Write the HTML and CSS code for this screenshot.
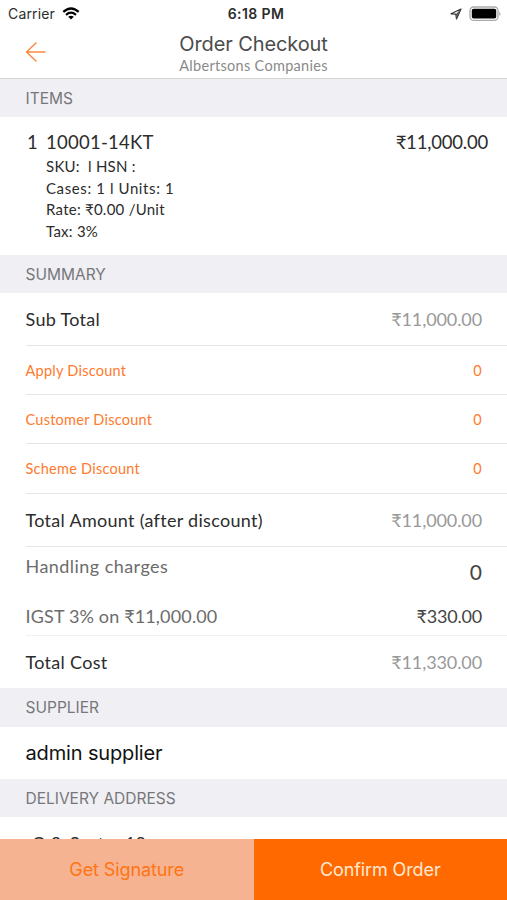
FILE: index.html
```html
<!DOCTYPE html>
<html lang="en">
<head>
    <meta charset="utf-8" />
    <title>Order Checkout</title>
    <meta name="viewport" content="width=device-width, initial-scale=1.0">
    <link rel="stylesheet" href="styles.css">
</head>
<body>
    <div class="screen">
        <div class="status-bar">
            <div class="carrier">
                <span>Carrier</span>
                <svg class="wifi" width="18" height="13" viewBox="0 0 18 13">
                    <path d="M1.3 4.9 Q9 -2 16.7 4.9" fill="none" stroke="#000" stroke-width="2.3" />
                    <path d="M4 7.8 Q9 3.5 14 7.8" fill="none" stroke="#000" stroke-width="2.2" />
                    <path d="M6.2 9.8 Q9 7.5 11.8 9.8 L9 12.6 Z" fill="#000" />
                </svg>
            </div>
            <span class="time">6:18 PM</span>
            <div class="status-icons">
                <svg width="12" height="12" viewBox="0 0 12 12">
                    <path d="M11 1 L1 5.8 L5.8 6.2 L6.5 11 Z" fill="none" stroke="#333" stroke-width="1.2" stroke-linejoin="round" />
                    <path d="M11 1 L5.8 6.2 L6.5 11 Z" fill="#555" />
                </svg>
                <svg width="32" height="16" viewBox="0 0 32 16">
                    <rect x="1" y="1" width="28" height="13.4" rx="3.6" fill="#fff" stroke="#aaa" stroke-width="1.3" />
                    <rect x="2.8" y="2.8" width="24.4" height="9.8" rx="1.8" fill="#000" />
                    <path d="M30.4 5.4 Q32.4 7.7 30.4 10 Z" fill="#999" />
                </svg>
            </div>
        </div>

        <header class="nav">
            <a class="back" href="#" aria-label="Back">
                <svg width="22" height="22" viewBox="0 0 22 22">
                    <path d="M11.5 1.5 L1.5 11 L11.5 20.5 M1.5 11 H20.5" fill="none" stroke="#ff8840" stroke-width="1.4" />
                </svg>
            </a>
            <div class="titles">
                <h1>Order Checkout</h1>
                <p>Albertsons Companies</p>
            </div>
        </header>

        <main>
            <h2>ITEMS</h2>
            <div class="item">
                <span class="qty">1</span>
                <div class="item-info">
                    <div class="item-name">10001-14KT</div>
                    <div>SKU:&nbsp; l HSN :</div>
                    <div class="cases">Cases: 1 l Units: 1</div>
                    <div>Rate: ₹0.00 /Unit</div>
                    <div>Tax: 3%</div>
                </div>
                <span class="price">₹11,000.00</span>
            </div>

            <h2>SUMMARY</h2>
            <div class="row total"><span class="label">Sub Total</span><span class="amount">₹11,000.00</span></div>
            <div class="row discount"><span>Apply Discount</span><span>0</span></div>
            <div class="row discount"><span>Customer Discount</span><span>0</span></div>
            <div class="row discount last"><span>Scheme Discount</span><span>0</span></div>
            <div class="row total"><span class="label">Total Amount (after discount)</span><span class="amount">₹11,000.00</span></div>
            <div class="charges">
                <div class="charge handling"><span>Handling charges</span><span class="zero">0</span></div>
                <div class="charge igst"><span>IGST 3% on ₹11,000.00</span><span class="tax">₹330.00</span></div>
            </div>
            <div class="row total cost"><span class="label">Total Cost</span><span class="amount">₹11,330.00</span></div>

            <h2 class="supplier-head">SUPPLIER</h2>
            <div class="supplier">admin supplier</div>

            <h2>DELIVERY ADDRESS</h2>
            <div class="address">C-2, Sector 18</div>
        </main>

        <footer>
            <button type="button" class="signature">Get Signature</button>
            <button type="button" class="confirm">Confirm Order</button>
        </footer>
    </div>
</body>
</html>
```

FILE: styles.css
```css
* {
    box-sizing: border-box;
}

body {
    margin: 0;
    background: #fff;
    font-family: Lato, "Noto Sans", sans-serif;
    color: #2c2c2c;
}

h1, h2, p {
    margin: 0;
    font-weight: normal;
}

.screen {
    display: flex;
    flex-direction: column;
    height: 900px;
    overflow: hidden;
}

.status-bar {
    display: grid;
    grid-template-columns: 1fr auto 1fr;
    align-items: center;
    height: 27px;
    padding: 0 6px 0 8px;
    font-family: Inter, sans-serif;
    font-size: 14px;
    flex-shrink: 0;
}

.carrier, .status-icons {
    display: flex;
    align-items: center;
    gap: 7px;
}

.carrier {
    letter-spacing: 0.15px;
}

.status-icons {
    justify-content: flex-end;
}

.time {
    padding-left: 3px;
    font-weight: 600;
    letter-spacing: 0.4px;
}

.nav {
    display: grid;
    grid-template-columns: 1fr auto 1fr;
    height: 52px;
    padding: 0 25px;
    border-bottom: 1px solid #d3d3d6;
    flex-shrink: 0;
}

.back {
    padding-top: 14px;
}

.back svg {
    display: block;
}

.titles {
    padding-top: 5px;
}

h1 {
    font-family: Inter, sans-serif;
    font-size: 20px;
    line-height: 24px;
    letter-spacing: -0.1px;
    color: #4c4c4c;
}

.titles p {
    font-size: 14.5px;
    line-height: 19px;
    letter-spacing: 0.3px;
    color: #8a8a8a;
}

main {
    flex: 1;
    min-height: 0;
    overflow: hidden;
}

h2 {
    height: 38px;
    padding-left: 25.5px;
    background: #efeff4;
    font-family: Inter, sans-serif;
    font-size: 15.5px;
    line-height: 39px;
    color: #77777b;
}

.item {
    display: flex;
    height: 138px;
    padding: 13px 19px 0 27px;
    font-size: 15px;
    line-height: 21.6px;
    letter-spacing: 0.25px;
}

.qty, .item-name, .price {
    font-size: 18.5px;
    line-height: 24px;
}

.item-name {
    margin-bottom: 2px;
}

.cases {
    letter-spacing: 0.6px;
}

.qty {
    width: 19px;
}

.item-info {
    flex: 1;
}

.price {
    letter-spacing: -0.2px;
}

.row {
    display: flex;
    justify-content: space-between;
    align-items: center;
    margin-left: 25.5px;
    padding-right: 25px;
    border-bottom: 1px solid #e5e5e7;
}

.total {
    height: 53px;
    font-size: 18px;
}

.label {
    letter-spacing: 0.3px;
}

.amount {
    color: #999;
    letter-spacing: -0.1px;
}

.discount {
    height: 49px;
    font-size: 14.5px;
    letter-spacing: 0.25px;
    color: #ff7a2c;
}

.discount.last {
    height: 50px;
}

.charges {
    height: 89px;
    margin-left: 25.5px;
    padding-right: 25px;
    border-bottom: 1px solid #f0f0f2;
    font-size: 18px;
    color: #6c6c6c;
}

.charge {
    display: flex;
    justify-content: space-between;
    line-height: 24px;
    letter-spacing: 0.45px;
}

.igst {
    letter-spacing: 0.15px;
}

.handling {
    height: 57px;
    padding-top: 7px;
}

.zero {
    padding-top: 6px;
    font-size: 21px;
    letter-spacing: 0;
    color: #444;
}

.tax {
    letter-spacing: -0.2px;
    color: #444;
}

.cost {
    height: 52px;
    border-bottom: 0;
}

.supplier-head {
    height: 39px;
    line-height: 40px;
}

.supplier {
    height: 52px;
    padding-left: 25.5px;
    font-family: Inter, sans-serif;
    font-size: 20px;
    line-height: 52px;
    letter-spacing: -0.15px;
    color: #111;
}

.address {
    padding: 14px 0 0 32px;
    font-size: 18px;
    line-height: 24px;
}

footer {
    display: grid;
    grid-template-columns: 1fr 1fr;
    height: 61px;
    flex-shrink: 0;
}

button {
    border: 0;
    padding: 0;
    font-family: Inter, sans-serif;
    font-size: 18px;
    letter-spacing: -0.1px;
}

.signature {
    background: #f5b391;
    color: #ff7414;
}

.confirm {
    background: #ff6900;
    color: #ffe9d3;
}
```
